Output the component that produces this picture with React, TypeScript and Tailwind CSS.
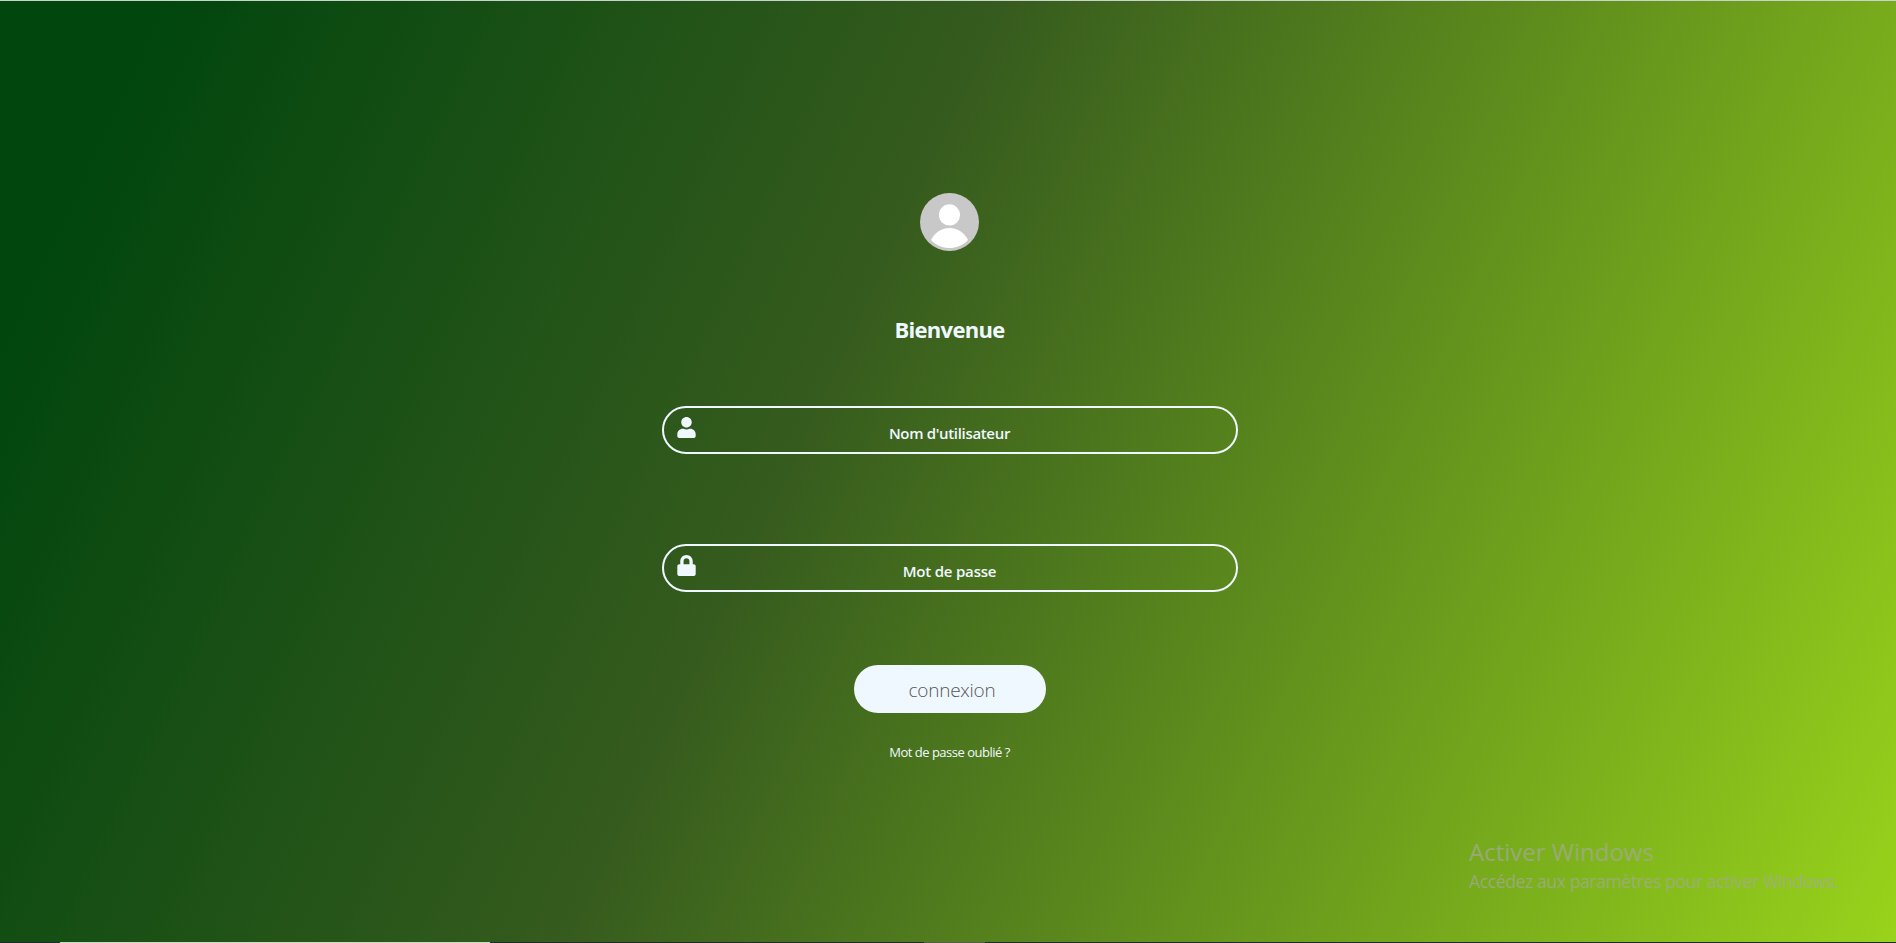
import React from "react";
import { FaLock, FaUser } from "react-icons/fa";

function Field({ icon, label, tracking }: { icon: React.ReactNode; label: string; tracking: string }) {
  return (
    <div className="grid h-12 w-[576px] grid-cols-[1fr_auto_1fr] rounded-[24px] border-2 border-[#f0f8ff]">
      <span className="pt-[9px] pl-[13.5px] text-[#f0f8ff]">{icon}</span>
      <span className={`pt-[13px] text-[15px] leading-6 font-semibold text-[#f0f8ff] ${tracking}`}>{label}</span>
      <span />
    </div>
  );
}

export default function App() {
  return (
    <div className="flex h-[943px] w-full flex-col overflow-hidden bg-[#c9d3cc] font-['Open_Sans','Noto_Sans',sans-serif]">
      <div className="h-px shrink-0" />
      <main className="relative flex h-[941px] shrink-0 flex-col items-center bg-[linear-gradient(115deg,#00460d_6.5%,#365b1e_43%,#99d31b_100%)] pl-[3px]">
        <svg viewBox="0 0 59 58" className="mt-[192px] h-[58px] w-[59px] shrink-0">
          <ellipse cx="29.5" cy="29" rx="29.5" ry="29" fill="#c8c8c8" />
          <circle cx="29.5" cy="21.9" r="10.6" fill="#fff" />
          <path d="M11 47C15 39 22 35 29.5 35S44 39 48 47C43 52.500 36 55 29.500 55S16 52.500 11 47Z" fill="#fff" />
        </svg>
        <h1 className="mt-[62px] text-[22px] leading-8 font-bold tracking-[-0.7px] text-[#f0f8ff]">Bienvenue</h1>
        <div className="mt-[61px]">
          <Field icon={<FaUser className="h-[21px] w-[19px]" />} label="Nom d'utilisateur" tracking="tracking-[-0.33px]" />
        </div>
        <div className="mt-[90px]">
          <Field icon={<FaLock className="h-[21px] w-[19px]" />} label="Mot de passe" tracking="tracking-[-0.2px]" />
        </div>
        <button className="mt-[73px] h-12 w-48 rounded-[24px] bg-[#f0f8ff] pl-[5px] text-[19px] leading-[50px] font-light tracking-[-0.25px] text-[#555]">connexion</button>
        <a className="mt-[29px] text-[13px] leading-5 tracking-[-0.5px] text-[#f0f8ff]">Mot de passe oublié ?</a>
        <div className="absolute top-[833px] left-[1469px] whitespace-nowrap text-[#a3a99a]/75">
          <p className="text-[24px] leading-9 tracking-[0px]">Activer Windows</p>
          <p className="-mt-px text-[17.5px] leading-6 tracking-[-0.37px]">Accédez aux paramètres pour activer Windows.</p>
        </div>
      </main>
      <div className="flex h-px shrink-0 bg-[#1c2b30]">
        <div className="ml-[60px] w-[430px] bg-[#c8dcc0]" />
        <div className="ml-[434px] w-[61px] bg-[#555f50]" />
      </div>
    </div>
  );
}
